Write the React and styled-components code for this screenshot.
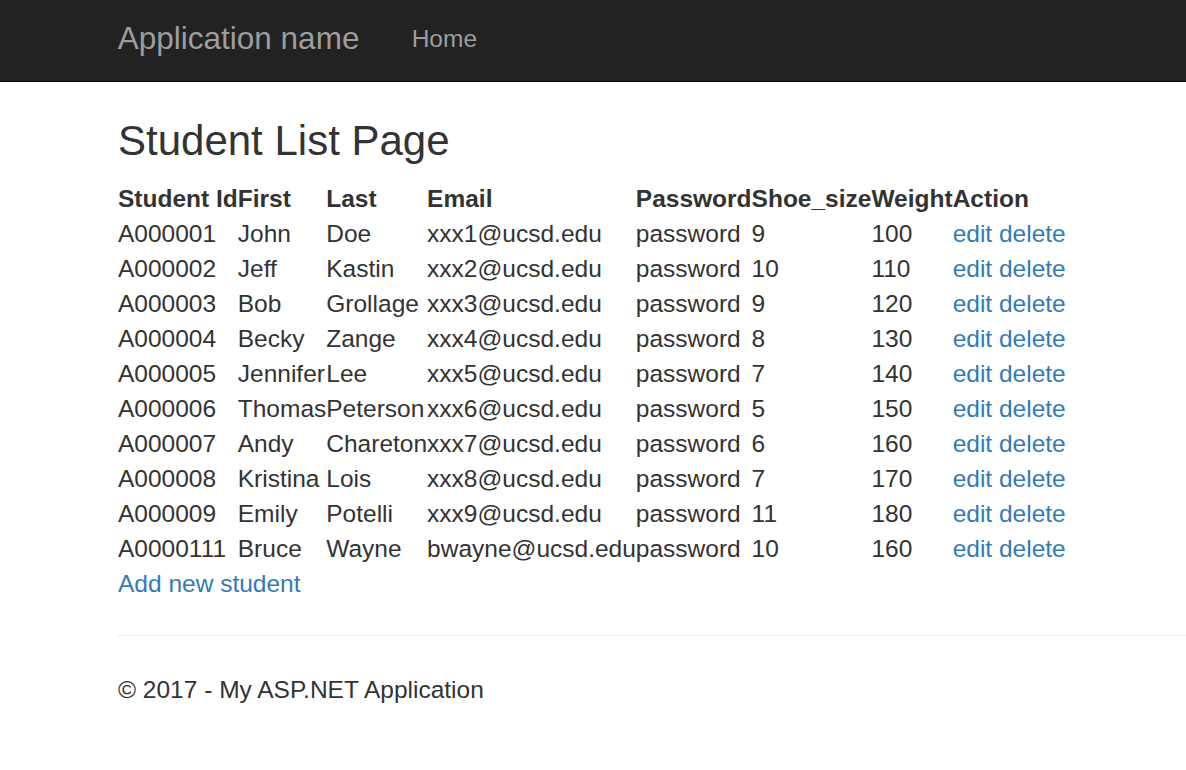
import React from "react";
import styled, { createGlobalStyle } from "styled-components";

const students = [
  ["A000001", "John", "Doe", "xxx1@ucsd.edu", "password", "9", "100"],
  ["A000002", "Jeff", "Kastin", "xxx2@ucsd.edu", "password", "10", "110"],
  ["A000003", "Bob", "Grollage", "xxx3@ucsd.edu", "password", "9", "120"],
  ["A000004", "Becky", "Zange", "xxx4@ucsd.edu", "password", "8", "130"],
  ["A000005", "Jennifer", "Lee", "xxx5@ucsd.edu", "password", "7", "140"],
  ["A000006", "Thomas", "Peterson", "xxx6@ucsd.edu", "password", "5", "150"],
  ["A000007", "Andy", "Chareton", "xxx7@ucsd.edu", "password", "6", "160"],
  ["A000008", "Kristina", "Lois", "xxx8@ucsd.edu", "password", "7", "170"],
  ["A000009", "Emily", "Potelli", "xxx9@ucsd.edu", "password", "11", "180"],
  ["A0000111", "Bruce", "Wayne", "bwayne@ucsd.edu", "password", "10", "160"],
];

const headers = ["Student Id", "First", "Last", "Email", "Password", "Shoe_size", "Weight", "Action"];

const App = () => {
  return (
    <>
      <GlobalStyle />
      <Navbar>
        <Brand href="#">Application name</Brand>
        <NavLink href="#">Home</NavLink>
      </Navbar>
      <Body>
        <Title>Student List Page</Title>
        <Table>
          <thead>
            <tr>
              {headers.map((h) => (
                <th key={h}>{h}</th>
              ))}
            </tr>
          </thead>
          <tbody>
            {students.map((s) => (
              <tr key={s[0]}>
                {s.map((v, i) => (
                  <td key={i}>{v}</td>
                ))}
                <td>
                  <Link href="#">edit</Link> <Link href="#">delete</Link>
                </td>
              </tr>
            ))}
          </tbody>
        </Table>
        <Link href="#">Add new student</Link>
        <Rule />
        <Footer>
          <p>© 2017 - My ASP.NET Application</p>
        </Footer>
      </Body>
    </>
  );
};

const GlobalStyle = createGlobalStyle`
  body {
    margin: 0;
    background: #fff;
    font-family: "Liberation Sans", Arial, Helvetica, sans-serif;
    font-size: 24.5px;
    line-height: 35px;
    color: #333;
  }
`;

const Navbar = styled.div`
  display: flex;
  align-items: flex-start;
  height: 80.75px;
  background-color: #222;
  border-bottom: 1.75px solid #080808;
  padding-left: 91.75px;
`;

const Brand = styled.a`
  padding: 20.75px 26px 0;
  font-size: 31.5px;
  line-height: 35px;
  color: #9d9d9d;
  text-decoration: none;
`;

const NavLink = styled.a`
  padding: 20.75px 26.25px 0;
  font-size: 24.5px;
  line-height: 35px;
  color: #9d9d9d;
  text-decoration: none;
`;

const Body = styled.div`
  padding-left: 118px;
`;

const Title = styled.h3`
  margin: 36px 0 17.5px;
  font-size: 42px;
  font-weight: 500;
  line-height: 46.2px;
  color: #333;
`;

const Table = styled.table`
  border-collapse: collapse;
  border-spacing: 0;

  th,
  td {
    padding: 0;
    text-align: left;
    vertical-align: top;
    white-space: nowrap;
    line-height: 35px;
  }

  th {
    font-weight: bold;
  }
`;

const Link = styled.a`
  color: #337ab7;
  text-decoration: none;
`;

const Rule = styled.hr`
  margin: 34px 0 36px;
  border: 0;
  border-top: 1.75px solid #eee;
`;

const Footer = styled.footer`
  p {
    margin: 0 0 17.5px;
  }
`;

export default App;
